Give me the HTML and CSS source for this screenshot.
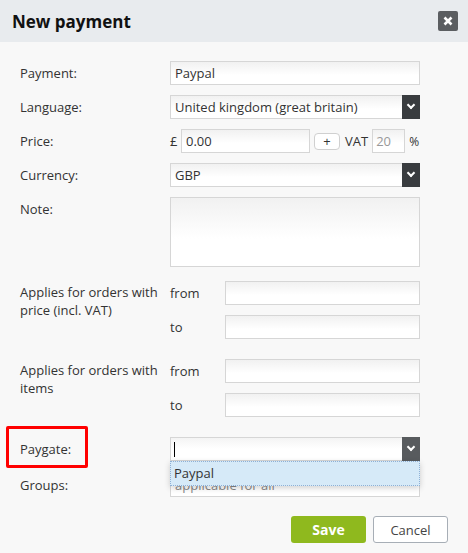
FILE: index.html
```html
<!DOCTYPE html>
<html lang="en">
  <head>
    <meta charset="UTF-8" />
    <title>New payment</title>
    <link rel="stylesheet" href="styles.css">
  </head>
  <body>
    <div class="dialog">
      <header class="dialog-head">
        <h1>New payment</h1>
        <button class="close" type="button">
          <svg width="10" height="10" viewBox="0 0 10 10"><path d="M1.5 1.5 L8.5 8.5 M8.5 1.5 L1.5 8.5" stroke="#fff" stroke-width="2.6" /></svg>
        </button>
      </header>

      <form class="dialog-body">
        <div class="row">
          <label>Payment:</label>
          <input class="text" type="text" value="Paypal" />
        </div>

        <div class="row">
          <label>Language:</label>
          <div class="select"><span>United kingdom (great britain)</span><i class="arrow"></i></div>
        </div>

        <div class="row">
          <label>Price:</label>
          <div class="price">
            <span class="cur">£</span>
            <input class="text price-input" type="text" value="0.00" />
            <button class="plus" type="button">+</button>
            <span class="vat">VAT</span>
            <input class="text vat-input" type="text" value="20" />
            <span class="pct">%</span>
          </div>
        </div>

        <div class="row">
          <label>Currency:</label>
          <div class="select"><span>GBP</span><i class="arrow"></i></div>
        </div>

        <div class="row top">
          <label>Note:</label>
          <textarea class="text note"></textarea>
        </div>

        <div class="row top range">
          <label class="two-line">Applies for orders with price (incl. VAT)</label>
          <div class="range-fields">
            <span>from</span><input class="text" type="text" />
            <span>to</span><input class="text" type="text" />
          </div>
        </div>

        <div class="row top range">
          <label class="two-line">Applies for orders with items</label>
          <div class="range-fields">
            <span>from</span><input class="text" type="text" />
            <span>to</span><input class="text" type="text" />
          </div>
        </div>

        <div class="row paygate">
          <label class="marked">Paygate:</label>
          <div class="combo">
            <div class="select focus"><span class="caret"></span><i class="arrow light"></i></div>
            <ul class="menu">
              <li class="active">Paypal</li>
            </ul>
          </div>
        </div>

        <div class="row">
          <label>Groups:</label>
          <input class="text groups" type="text" placeholder="applicable for all" />
        </div>

        <div class="actions">
          <button class="btn save" type="button">Save</button>
          <button class="btn cancel" type="button">Cancel</button>
        </div>
      </form>
    </div>
  </body>
</html>
```

FILE: styles.css
```css
*,
*::before,
*::after {
  box-sizing: border-box;
}
body {
  margin: 0;
  font-family: "Open Sans", Arial, sans-serif;
  font-size: 13px;
  color: #333;
  background-color: #f8f8f8;
}
.dialog {
  width: 468px;
  height: 553px;
  background-color: #f8f8f8;
}
.dialog-head {
  display: flex;
  align-items: center;
  justify-content: space-between;
  height: 42px;
  padding: 0 10px 0 12px;
  background-color: #e8ebee;
}
.dialog-head h1 {
  margin: 0;
  font-size: 17px;
  font-weight: bold;
  color: #111;
}
.close {
  display: flex;
  align-items: center;
  justify-content: center;
  width: 20px;
  height: 20px;
  padding: 0;
  border: none;
  border-radius: 2px;
  background-color: #5b5e61;
}
.dialog-body {
  padding: 19px 0 0 20px;
}
.row {
  display: flex;
  align-items: center;
  margin-bottom: 10px;
}
.row.top {
  align-items: flex-start;
}
.row > label {
  width: 150px;
  flex: none;
}
.text {
  height: 24px;
  border: 1px solid #d6d6d6;
  background: linear-gradient(to bottom, #f1f1f1, #fff 60%);
  font-family: inherit;
  font-size: 13px;
  color: #333;
  padding: 0 4px;
  outline: none;
}
.row > .text {
  width: 250px;
}
.select {
  position: relative;
  display: flex;
  align-items: center;
  width: 250px;
  height: 24px;
  border: 1px solid #d6d6d6;
  background: linear-gradient(to bottom, #f1f1f1, #fff 60%);
  padding: 0 4px;
}
.arrow {
  position: absolute;
  top: -1px;
  right: -1px;
  width: 18px;
  height: 24px;
  background-color: #393c3f;
}
.arrow::after {
  content: "";
  position: absolute;
  left: 6px;
  top: 7px;
  width: 6px;
  height: 6px;
  border-right: 2px solid #fff;
  border-bottom: 2px solid #fff;
  transform: rotate(45deg);
}
.arrow.light {
  background-color: #585b5e;
}
.price {
  display: flex;
  align-items: center;
}
.cur {
  width: 11px;
}
.price-input {
  width: 129px;
}
.plus {
  width: 26px;
  height: 17px;
  margin: 0 5px 0 4px;
  padding: 0;
  border: 1px solid #d0d0d0;
  border-radius: 4px;
  background: #fff;
  font-family: inherit;
  font-size: 13px;
  line-height: 14px;
  color: #333;
}
.vat {
  margin-right: 4px;
}
.vat-input {
  width: 33px;
  color: #999;
  padding: 0 3px;
}
.pct {
  margin-left: 4px;
  font-size: 12px;
}
.row.top > label {
  padding-top: 3px;
}
.note {
  width: 250px;
  height: 70px;
  resize: none;
  margin-bottom: 4px;
}
.range {
  margin-bottom: 20px;
}
.row.top > label.two-line {
  padding-top: 2px;
  line-height: 18px;
  padding-right: 4px;
}
.range-fields {
  display: grid;
  grid-template-columns: 55px 195px;
  row-gap: 10px;
  align-items: center;
}
.range-fields .text {
  width: 195px;
}
.paygate {
  position: relative;
  margin-bottom: 12px;
}
.marked {
  position: relative;
}
.marked::before {
  content: "";
  position: absolute;
  left: -14px;
  top: -14px;
  width: 82px;
  height: 42px;
  border: 3px solid #ff0000;
  border-radius: 2px;
}
.combo {
  position: relative;
}
.select.focus {
  background: linear-gradient(to bottom, #f4f4f4, #fff 50%);
}
.caret {
  display: block;
  width: 1px;
  height: 15px;
  background-color: #000;
  margin-left: -1px;
}
.menu {
  position: absolute;
  left: 0;
  top: 24px;
  width: 250px;
  margin: 0;
  padding: 0;
  list-style: none;
  background-color: #fff;
  box-shadow: 0 2px 6px rgba(0, 0, 0, 0.18);
  z-index: 2;
}
.menu li {
  height: 25px;
  line-height: 23px;
  padding: 0 3px;
  background-color: #d6eaf8;
  border: 1px dotted #8fb1d6;
  font-size: 13px;
  color: #333;
}
.groups::placeholder {
  color: #888;
}
.actions {
  display: flex;
  justify-content: flex-end;
  gap: 7px;
  padding-right: 20px;
  margin-top: 19px;
}
.btn {
  width: 75px;
  height: 27px;
  border-radius: 3px;
  font-family: inherit;
  padding: 0;
}
.save {
  border: none;
  background-color: #8fb91e;
  color: #fff;
  font-size: 14px;
  font-weight: bold;
}
.cancel {
  border: 1px solid #a7aeb6;
  background-color: #fff;
  color: #444;
  font-size: 13px;
}
```
